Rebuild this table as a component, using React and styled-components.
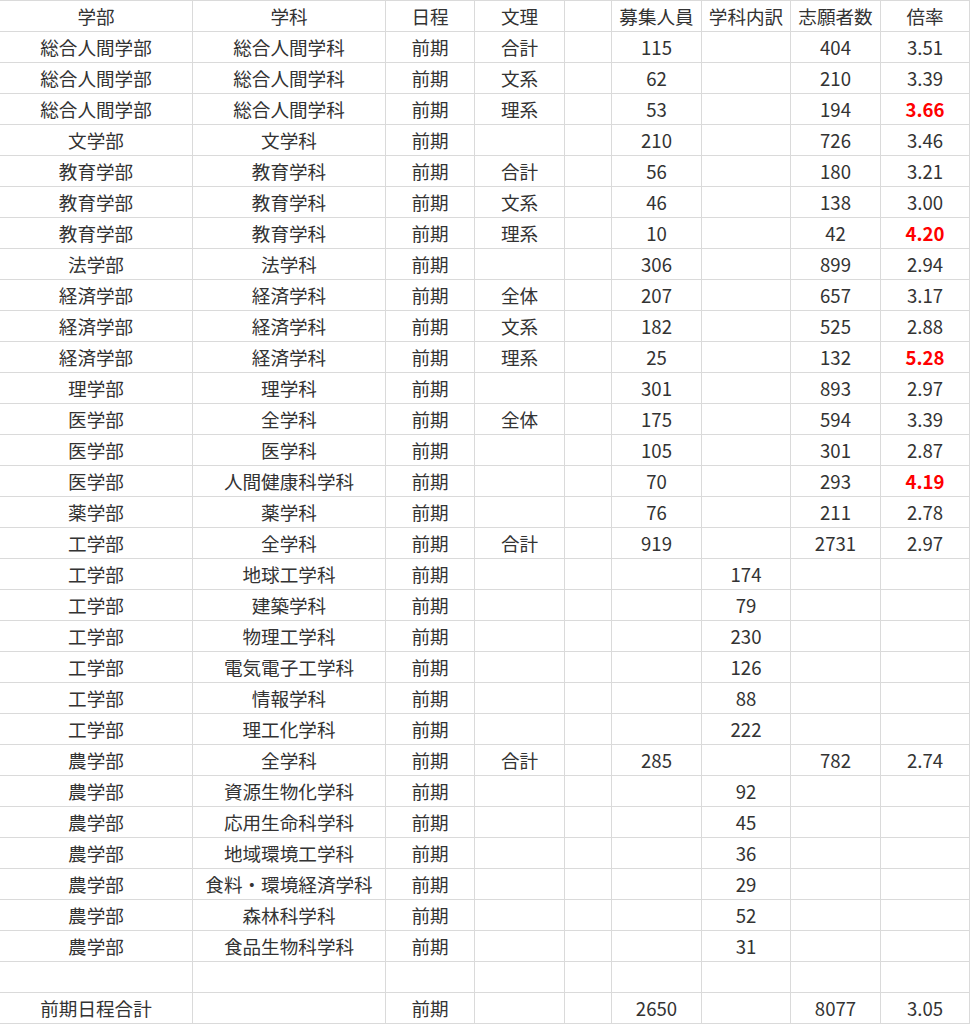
import React from "react";
import styled, { createGlobalStyle } from "styled-components";

const Global = createGlobalStyle`
  html, body { margin: 0; padding: 0; background: #fff; }
  body { font-family: "Noto Sans CJK JP", "Noto Sans", sans-serif; }
`;

const Sheet = styled.div`
  width: 970px;
  border-top: 1px solid #dadada;
  overflow: hidden;
`;

const Row = styled.div`
  display: grid;
  grid-template-columns: 193px 193px 89px 90px 47px 90px 89px 90px 89px;
  height: 31px;
`;

const Cell = styled.div`
  box-sizing: border-box;
  height: 31px;
  border-right: 1px solid #dadada;
  border-bottom: 1px solid #dadada;
  display: flex;
  align-items: center;
  justify-content: center;
  padding-top: 0;
  font-size: 18.6px;
  line-height: 1;
  color: ${(p) => (p.$hot ? "#ff0000" : "#333333")};
  font-weight: ${(p) => (p.$hot ? 700 : 400)};
  white-space: nowrap;
`;

const header = ["学部", "学科", "日程", "文理", "", "募集人員", "学科内訳", "志願者数", "倍率"];

const rows = [
  ["総合人間学部", "総合人間学科", "前期", "合計", "", "115", "", "404", "3.51"],
  ["総合人間学部", "総合人間学科", "前期", "文系", "", "62", "", "210", "3.39"],
  ["総合人間学部", "総合人間学科", "前期", "理系", "", "53", "", "194", "3.66", true],
  ["文学部", "文学科", "前期", "", "", "210", "", "726", "3.46"],
  ["教育学部", "教育学科", "前期", "合計", "", "56", "", "180", "3.21"],
  ["教育学部", "教育学科", "前期", "文系", "", "46", "", "138", "3.00"],
  ["教育学部", "教育学科", "前期", "理系", "", "10", "", "42", "4.20", true],
  ["法学部", "法学科", "前期", "", "", "306", "", "899", "2.94"],
  ["経済学部", "経済学科", "前期", "全体", "", "207", "", "657", "3.17"],
  ["経済学部", "経済学科", "前期", "文系", "", "182", "", "525", "2.88"],
  ["経済学部", "経済学科", "前期", "理系", "", "25", "", "132", "5.28", true],
  ["理学部", "理学科", "前期", "", "", "301", "", "893", "2.97"],
  ["医学部", "全学科", "前期", "全体", "", "175", "", "594", "3.39"],
  ["医学部", "医学科", "前期", "", "", "105", "", "301", "2.87"],
  ["医学部", "人間健康科学科", "前期", "", "", "70", "", "293", "4.19", true],
  ["薬学部", "薬学科", "前期", "", "", "76", "", "211", "2.78"],
  ["工学部", "全学科", "前期", "合計", "", "919", "", "2731", "2.97"],
  ["工学部", "地球工学科", "前期", "", "", "", "174", "", ""],
  ["工学部", "建築学科", "前期", "", "", "", "79", "", ""],
  ["工学部", "物理工学科", "前期", "", "", "", "230", "", ""],
  ["工学部", "電気電子工学科", "前期", "", "", "", "126", "", ""],
  ["工学部", "情報学科", "前期", "", "", "", "88", "", ""],
  ["工学部", "理工化学科", "前期", "", "", "", "222", "", ""],
  ["農学部", "全学科", "前期", "合計", "", "285", "", "782", "2.74"],
  ["農学部", "資源生物化学科", "前期", "", "", "", "92", "", ""],
  ["農学部", "応用生命科学科", "前期", "", "", "", "45", "", ""],
  ["農学部", "地域環境工学科", "前期", "", "", "", "36", "", ""],
  ["農学部", "食料・環境経済学科", "前期", "", "", "", "29", "", ""],
  ["農学部", "森林科学科", "前期", "", "", "", "52", "", ""],
  ["農学部", "食品生物科学科", "前期", "", "", "", "31", "", ""],
  ["", "", "", "", "", "", "", "", ""],
  ["前期日程合計", "", "前期", "", "", "2650", "", "8077", "3.05"],
];

export default function App() {
  return (
    <>
      <Global />
      <Sheet>
        <Row>
          {header.map((h, i) => (
            <Cell key={i}>{h}</Cell>
          ))}
        </Row>
        {rows.map((r, ri) => (
          <Row key={ri}>
            {r.slice(0, 9).map((v, ci) => (
              <Cell key={ci} $hot={ci === 8 && r[9] === true}>
                {v}
              </Cell>
            ))}
          </Row>
        ))}
      </Sheet>
    </>
  );
}
